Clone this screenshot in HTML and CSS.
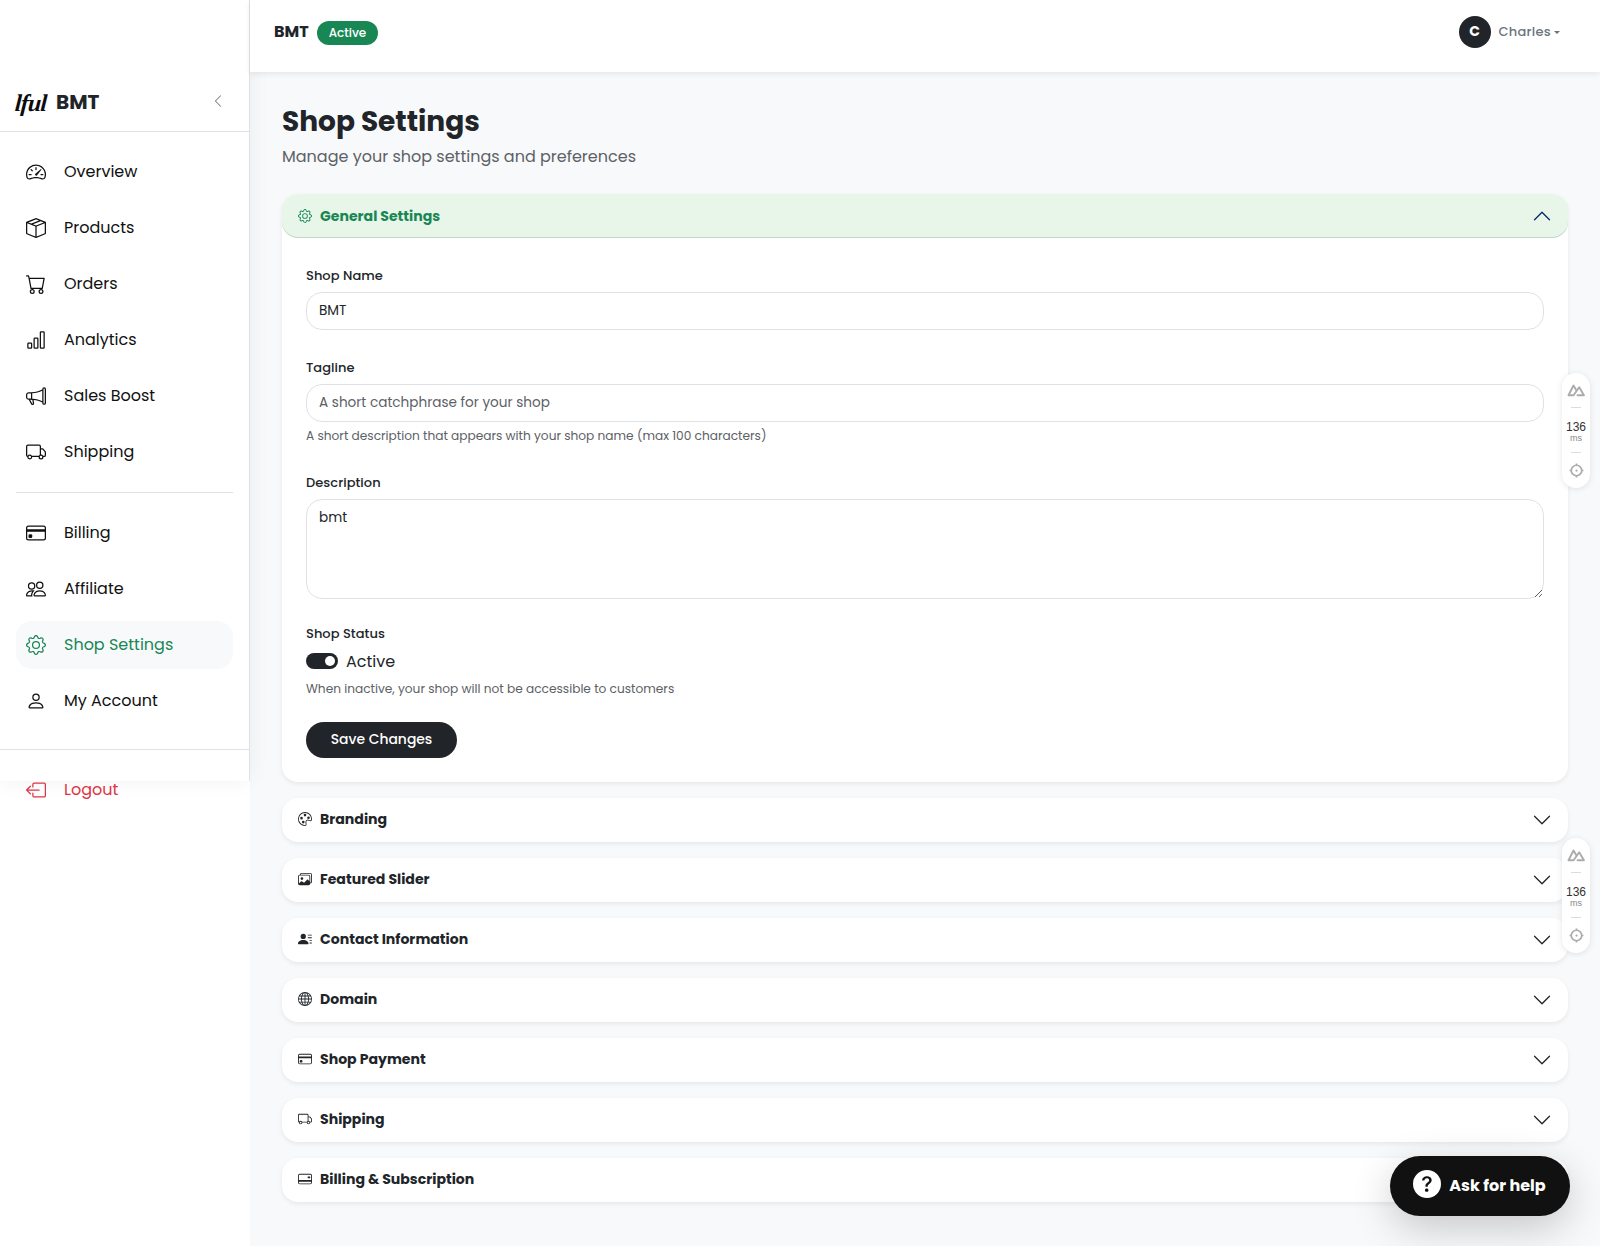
FILE: index.html
```html
<!DOCTYPE html>
<html lang="en">
<head>
<meta charset="utf-8">
<title>Shop Settings - BMT</title>
<link rel="stylesheet" href="styles.css">
</head>
<body>
<svg class="sprite" aria-hidden="true">
  <symbol id="speedometer" viewBox="0 0 16 16"><path d="M8 4a.5.5 0 0 1 .5.5V6a.5.5 0 0 1-1 0V4.5A.5.5 0 0 1 8 4zM3.732 5.732a.5.5 0 0 1 .707 0l.915.914a.5.5 0 1 1-.708.708l-.914-.915a.5.5 0 0 1 0-.707zM2 10a.5.5 0 0 1 .5-.5h1.586a.5.5 0 0 1 0 1H2.5A.5.5 0 0 1 2 10zm9.5 0a.5.5 0 0 1 .5-.5h1.5a.5.5 0 0 1 0 1H12a.5.5 0 0 1-.5-.5zm.754-4.246a.389.389 0 0 0-.527-.02L7.547 9.31a.91.91 0 1 0 1.302 1.258l3.434-4.297a.389.389 0 0 0-.029-.518z"/><path fill-rule="evenodd" d="M0 10a8 8 0 1 1 15.547 2.661c-.442 1.253-1.845 1.602-2.932 1.25C11.309 13.488 9.475 13 8 13c-1.474 0-3.31.488-4.615.911-1.087.352-2.49.003-2.932-1.25A7.988 7.988 0 0 1 0 10zm8-7a7 7 0 0 0-6.603 9.329c.203.575.923.876 1.68.63C4.397 12.533 6.358 12 8 12s3.604.532 4.923.96c.757.245 1.477-.056 1.68-.631A7 7 0 0 0 8 3z"/></symbol>
  <symbol id="box" viewBox="0 0 16 16"><path d="M8.186 1.113a.5.5 0 0 0-.372 0L1.846 3.5l2.404.961L10.404 2l-2.218-.887zm3.564 1.426L5.596 5 8 5.961 14.154 3.5l-2.404-.961zm3.25 1.7-6.5 2.6v7.922l6.5-2.6V4.24zM7.5 14.762V6.838L1 4.239v7.923l6.5 2.6zM7.443.184a1.5 1.5 0 0 1 1.114 0l7.129 2.852A.5.5 0 0 1 16 3.5v8.662a1 1 0 0 1-.629.928l-7.185 2.874a.5.5 0 0 1-.372 0L.63 13.09a1 1 0 0 1-.63-.928V3.5a.5.5 0 0 1 .314-.464L7.443.184z"/></symbol>
  <symbol id="cart" viewBox="0 0 16 16"><path d="M0 1.5A.5.5 0 0 1 .5 1H2a.5.5 0 0 1 .485.379L2.89 3H14.5a.5.5 0 0 1 .491.592l-1.5 8A.5.5 0 0 1 13 12H4a.5.5 0 0 1-.491-.408L2.01 3.607 1.61 2H.5a.5.5 0 0 1-.5-.5zM3.102 4l1.313 7h8.17l1.313-7H3.102zM5 12a2 2 0 1 0 0 4 2 2 0 0 0 0-4zm7 0a2 2 0 1 0 0 4 2 2 0 0 0 0-4zm-7 1a1 1 0 1 1 0 2 1 1 0 0 1 0-2zm7 0a1 1 0 1 1 0 2 1 1 0 0 1 0-2z"/></symbol>
  <symbol id="chart" viewBox="0 0 16 16"><path d="M4 11H2v3h2v-3zm5-4H7v7h2V7zm5-5v12h-2V2h2zm-2-1a1 1 0 0 0-1 1v12a1 1 0 0 0 1 1h2a1 1 0 0 0 1-1V2a1 1 0 0 0-1-1h-2zM6 7a1 1 0 0 1 1-1h2a1 1 0 0 1 1 1v7a1 1 0 0 1-1 1H7a1 1 0 0 1-1-1V7zm-5 4a1 1 0 0 1 1-1h2a1 1 0 0 1 1 1v3a1 1 0 0 1-1 1H2a1 1 0 0 1-1-1v-3z"/></symbol>
  <symbol id="megaphone" viewBox="0 0 16 16"><path d="M13 2.5a1.5 1.5 0 0 1 3 0v11a1.5 1.5 0 0 1-3 0v-.214c-2.162-1.241-4.49-1.843-6.912-2.083l.405 2.712A1 1 0 0 1 5.51 15.1h-.548a1 1 0 0 1-.916-.599l-1.85-3.49a68.14 68.14 0 0 0-.202-.003A2.014 2.014 0 0 1 0 9V7a2.02 2.02 0 0 1 1.992-2.013 74.663 74.663 0 0 0 2.483-.075c3.043-.154 6.148-.849 8.525-2.199V2.5zm1 0v11a.5.5 0 0 0 1 0v-11a.5.5 0 0 0-1 0zm-1 1.35c-2.344 1.205-5.209 1.842-8 2.033v4.233c.18.01.359.022.537.036 2.568.189 5.093.744 7.463 1.993V3.85zm-9 6.215v-4.13a95.09 95.09 0 0 1-1.992.052A1.02 1.02 0 0 0 1 7v2c0 .55.448 1.002 1.006 1.009A60.49 60.49 0 0 1 4 10.065zm-.657.975 1.609 3.037.01.024h.548l-.002-.014-.443-2.966a68.019 68.019 0 0 0-1.722-.082z"/></symbol>
  <symbol id="truck" viewBox="0 0 16 16"><path d="M0 3.5A1.5 1.5 0 0 1 1.5 2h9A1.5 1.5 0 0 1 12 3.5V5h1.02a1.5 1.5 0 0 1 1.17.563l1.481 1.85a1.5 1.5 0 0 1 .329.938V10.5a1.5 1.5 0 0 1-1.5 1.5H14a2 2 0 1 1-4 0H5a2 2 0 1 1-3.998-.085A1.5 1.5 0 0 1 0 10.5v-7zm1.294 7.456A1.999 1.999 0 0 1 4.732 11h5.536a2.01 2.01 0 0 1 .732-.732V3.5a.5.5 0 0 0-.5-.5h-9a.5.5 0 0 0-.5.5v7a.5.5 0 0 0 .294.456zM12 10a2 2 0 0 1 1.732 1h.768a.5.5 0 0 0 .5-.5V8.35a.5.5 0 0 0-.11-.312l-1.48-1.85A.5.5 0 0 0 13.02 6H12v4zm-9 1a1 1 0 1 0 0 2 1 1 0 0 0 0-2zm9 0a1 1 0 1 0 0 2 1 1 0 0 0 0-2z"/></symbol>
  <symbol id="card" viewBox="0 0 16 16"><path d="M0 4a2 2 0 0 1 2-2h12a2 2 0 0 1 2 2v8a2 2 0 0 1-2 2H2a2 2 0 0 1-2-2V4zm2-1a1 1 0 0 0-1 1v1h14V4a1 1 0 0 0-1-1H2zm13 4H1v5a1 1 0 0 0 1 1h12a1 1 0 0 0 1-1V7z"/><path d="M2 10a1 1 0 0 1 1-1h1a1 1 0 0 1 1 1v1a1 1 0 0 1-1 1H3a1 1 0 0 1-1-1v-1z"/></symbol>
  <symbol id="people" viewBox="0 0 16 16"><path d="M15 14s1 0 1-1-1-4-5-4-5 3-5 4 1 1 1 1h8Zm-7.978-1A.261.261 0 0 1 7 12.996c.001-.264.167-1.03.76-1.72C8.312 10.629 9.282 10 11 10c1.717 0 2.687.63 3.24 1.276.593.69.758 1.457.76 1.72l-.008.002a.274.274 0 0 1-.014.002H7.022ZM11 7a2 2 0 1 0 0-4 2 2 0 0 0 0 4Zm3-2a3 3 0 1 1-6 0 3 3 0 0 1 6 0ZM6.936 9.28a5.88 5.88 0 0 0-1.23-.247A7.35 7.35 0 0 0 5 9c-4 0-5 3-5 4 0 .667.333 1 1 1h4.216A2.238 2.238 0 0 1 5 13c0-1.01.377-2.042 1.09-2.904.243-.294.526-.569.846-.816ZM4.92 10A5.493 5.493 0 0 0 4 13H1c0-.26.164-1.03.76-1.724.545-.636 1.492-1.256 3.16-1.275ZM1.5 5.5a3 3 0 1 1 6 0 3 3 0 0 1-6 0Zm3-2a2 2 0 1 0 0 4 2 2 0 0 0 0-4Z"/></symbol>
  <symbol id="gear" viewBox="0 0 16 16"><path d="M8 4.754a3.246 3.246 0 1 0 0 6.492 3.246 3.246 0 0 0 0-6.492zM5.754 8a2.246 2.246 0 1 1 4.492 0 2.246 2.246 0 0 1-4.492 0z"/><path d="M9.796 1.343c-.527-1.79-3.065-1.79-3.592 0l-.094.319a.873.873 0 0 1-1.255.52l-.292-.16c-1.64-.892-3.433.902-2.54 2.541l.159.292a.873.873 0 0 1-.52 1.255l-.319.094c-1.79.527-1.79 3.065 0 3.592l.319.094a.873.873 0 0 1 .52 1.255l-.16.292c-.892 1.64.901 3.434 2.541 2.54l.292-.159a.873.873 0 0 1 1.255.52l.094.319c.527 1.79 3.065 1.79 3.592 0l.094-.319a.873.873 0 0 1 1.255-.52l.292.16c1.64.893 3.434-.902 2.54-2.541l-.159-.292a.873.873 0 0 1 .52-1.255l.319-.094c1.79-.527 1.79-3.065 0-3.592l-.319-.094a.873.873 0 0 1-.52-1.255l.16-.292c.893-1.64-.902-3.433-2.541-2.54l-.292.159a.873.873 0 0 1-1.255-.52l-.094-.319zm-2.633.283c.246-.835 1.428-.835 1.674 0l.094.319a1.873 1.873 0 0 0 2.693 1.115l.291-.16c.764-.415 1.6.42 1.184 1.185l-.159.292a1.873 1.873 0 0 0 1.116 2.692l.318.094c.835.246.835 1.428 0 1.674l-.319.094a1.873 1.873 0 0 0-1.115 2.693l.16.291c.415.764-.42 1.6-1.185 1.184l-.291-.159a1.873 1.873 0 0 0-2.693 1.116l-.094.318c-.246.835-1.428.835-1.674 0l-.094-.319a1.873 1.873 0 0 0-2.692-1.115l-.292.16c-.764.415-1.6-.42-1.184-1.185l.159-.291A1.873 1.873 0 0 0 1.945 8.93l-.319-.094c-.835-.246-.835-1.428 0-1.674l.319-.094A1.873 1.873 0 0 0 3.06 4.377l-.16-.292c-.415-.764.42-1.6 1.185-1.184l.292.159a1.873 1.873 0 0 0 2.692-1.115l.094-.319z"/></symbol>
  <symbol id="person" viewBox="0 0 16 16"><path d="M8 8a3 3 0 1 0 0-6 3 3 0 0 0 0 6zm2-3a2 2 0 1 1-4 0 2 2 0 0 1 4 0zm4 8c0 1-1 1-1 1H3s-1 0-1-1 1-4 6-4 6 3 6 4zm-1-.004c-.001-.246-.154-.986-.832-1.664C11.516 10.68 10.289 10 8 10c-2.29 0-3.516.68-4.168 1.332-.678.678-.83 1.418-.832 1.664h10z"/></symbol>
  <symbol id="exit" viewBox="0 0 16 16"><path d="M6 12.5a.5.5 0 0 0 .5.5h8a.5.5 0 0 0 .5-.5v-9a.5.5 0 0 0-.5-.5h-8a.5.5 0 0 0-.5.5v2a.5.5 0 0 1-1 0v-2A1.5 1.5 0 0 1 6.5 2h8A1.5 1.5 0 0 1 16 3.5v9a1.5 1.5 0 0 1-1.5 1.5h-8A1.5 1.5 0 0 1 5 12.5v-2a.5.5 0 0 1 1 0v2z"/><path d="M.146 8.354a.5.5 0 0 1 0-.708l3-3a.5.5 0 1 1 .708.708L1.707 7.5H10.5a.5.5 0 0 1 0 1H1.707l2.147 2.146a.5.5 0 0 1-.708.708l-3-3z"/></symbol>
  <symbol id="chevron-left" viewBox="0 0 16 16"><path d="M11.354 1.646a.5.5 0 0 1 0 .708L5.707 8l5.647 5.646a.5.5 0 0 1-.708.708l-6-6a.5.5 0 0 1 0-.708l6-6a.5.5 0 0 1 .708 0z"/></symbol>
  <symbol id="chevron-down" viewBox="0 0 16 16"><path d="M1.646 4.646a.5.5 0 0 1 .708 0L8 10.293l5.646-5.647a.5.5 0 0 1 .708.708l-6 6a.5.5 0 0 1-.708 0l-6-6a.5.5 0 0 1 0-.708z"/></symbol>
  <symbol id="palette" viewBox="0 0 16 16"><path d="M8 5a1.5 1.5 0 1 0 0-3 1.5 1.5 0 0 0 0 3zm4 3a1.5 1.5 0 1 0 0-3 1.5 1.5 0 0 0 0 3zM5.5 7a1.5 1.5 0 1 1-3 0 1.5 1.5 0 0 1 3 0zm.5 6a1.5 1.5 0 1 0 0-3 1.5 1.5 0 0 0 0 3z"/><path d="M16 8c0 3.15-1.866 2.585-3.567 2.07C11.42 9.763 10.465 9.473 10 10c-.603.683-.475 1.819-.351 2.92C9.826 14.495 9.996 16 8 16a8 8 0 1 1 8-8zm-8 7c.611 0 .654-.171.655-.176.078-.146.124-.464.07-1.119-.014-.168-.037-.37-.061-.591-.052-.464-.112-1.005-.118-1.462-.01-.707.083-1.61.704-2.314.369-.417.845-.578 1.272-.618.404-.038.812.026 1.16.104.343.077.702.186 1.025.284l.028.008c.346.105.658.199.953.266.653.148.904.083.991.024C14.717 9.38 15 9.161 15 8a7 7 0 1 0-7 7z"/></symbol>
  <symbol id="images" viewBox="0 0 16 16"><path d="M4.502 9a1.5 1.5 0 1 0 0-3 1.5 1.5 0 0 0 0 3z"/><path d="M14.002 13a2 2 0 0 1-2 2h-10a2 2 0 0 1-2-2V5A2 2 0 0 1 2 3a2 2 0 0 1 2-2h10a2 2 0 0 1 2 2v8a2 2 0 0 1-1.998 2zM14 2H4a1 1 0 0 0-1 1h9.002a2 2 0 0 1 2 2v7A1 1 0 0 0 15 11V3a1 1 0 0 0-1-1zM2.002 4a1 1 0 0 0-1 1v8l2.646-2.354a.5.5 0 0 1 .63-.062l2.66 1.773 3.71-3.71a.5.5 0 0 1 .577-.094l1.777 1.947V5a1 1 0 0 0-1-1h-10z"/></symbol>
  <symbol id="person-lines" viewBox="0 0 16 16"><path d="M6 8a3 3 0 1 0 0-6 3 3 0 0 0 0 6zm-5 6s-1 0-1-1 1-4 6-4 6 3 6 4-1 1-1 1H1zM11 3.5a.5.5 0 0 1 .5-.5h4a.5.5 0 0 1 0 1h-4a.5.5 0 0 1-.5-.5zm.5 2.5a.5.5 0 0 0 0 1h4a.5.5 0 0 0 0-1h-4zm2 3a.5.5 0 0 0 0 1h2a.5.5 0 0 0 0-1h-2zm0 3a.5.5 0 0 0 0 1h2a.5.5 0 0 0 0-1h-2z"/></symbol>
  <symbol id="globe" viewBox="0 0 16 16"><path d="M0 8a8 8 0 1 1 16 0A8 8 0 0 1 0 8zm7.5-6.923c-.67.204-1.335.82-1.887 1.855A7.97 7.97 0 0 0 5.145 4H7.5V1.077zM4.09 4a9.267 9.267 0 0 1 .64-1.539 6.7 6.7 0 0 1 .597-.933A7.025 7.025 0 0 0 2.255 4H4.09zm-.582 3.5c.03-.877.138-1.718.312-2.5H1.674a6.958 6.958 0 0 0-.656 2.5h2.49zM4.847 5a12.5 12.5 0 0 0-.338 2.5H7.5V5H4.847zM8.5 5v2.5h2.99a12.495 12.495 0 0 0-.337-2.5H8.5zM4.51 8.5a12.5 12.5 0 0 0 .337 2.5H7.5V8.5H4.51zm3.99 0V11h2.653c.187-.765.306-1.608.338-2.5H8.5zM5.145 12c.138.386.295.744.468 1.068.552 1.035 1.218 1.65 1.887 1.855V12H5.145zm.182 2.472a6.696 6.696 0 0 1-.597-.933A9.268 9.268 0 0 1 4.09 12H2.255a7.024 7.024 0 0 0 3.072 2.472zM3.82 11a13.652 13.652 0 0 1-.312-2.5h-2.49c.062.89.291 1.733.656 2.5H3.82zm6.853 3.472A7.024 7.024 0 0 0 13.745 12H11.91a9.27 9.27 0 0 1-.64 1.539 6.688 6.688 0 0 1-.597.933zM8.5 12v2.923c.67-.204 1.335-.82 1.887-1.855.173-.324.33-.682.468-1.068H8.5zm3.68-1h2.146c.365-.767.594-1.61.656-2.5h-2.49a13.65 13.65 0 0 1-.312 2.5zm2.802-3.5a6.959 6.959 0 0 0-.656-2.5H12.18c.174.782.282 1.623.312 2.5h2.49zM11.27 2.461c.247.464.462.98.64 1.539h1.835a7.024 7.024 0 0 0-3.072-2.472c.218.284.418.598.597.933zM10.855 4a7.966 7.966 0 0 0-.468-1.068C9.835 1.897 9.17 1.282 8.5 1.077V4h2.355z"/></symbol>
  <symbol id="card-back" viewBox="0 0 16 16"><path d="M11 5.5a.5.5 0 0 1 .5-.5h2a.5.5 0 0 1 .5.5v1a.5.5 0 0 1-.5.5h-2a.5.5 0 0 1-.5-.5v-1z"/><path d="M2 2a2 2 0 0 0-2 2v8a2 2 0 0 0 2 2h12a2 2 0 0 0 2-2V4a2 2 0 0 0-2-2H2zm13 2v5H1V4a1 1 0 0 1 1-1h12a1 1 0 0 1 1 1zm-1 9H2a1 1 0 0 1-1-1v-1h14v1a1 1 0 0 1-1 1z"/></symbol>
  <symbol id="question" viewBox="0 0 16 16"><path d="M16 8A8 8 0 1 1 0 8a8 8 0 0 1 16 0zM5.496 6.033h.825c.138 0 .248-.113.266-.25.09-.656.54-1.134 1.342-1.134.686 0 1.314.343 1.314 1.168 0 .635-.374.927-.965 1.371-.673.489-1.206 1.06-1.168 1.987l.003.217a.25.25 0 0 0 .25.246h.811a.25.25 0 0 0 .25-.25v-.105c0-.718.273-.927 1.01-1.486.609-.463 1.244-.977 1.244-2.056 0-1.511-1.276-2.241-2.673-2.241-1.267 0-2.655.59-2.75 2.286a.237.237 0 0 0 .241.247zm2.325 6.443c.61 0 1.029-.394 1.029-.927 0-.552-.42-.94-1.029-.94-.584 0-1.009.388-1.009.94 0 .533.425.927 1.01.927z"/></symbol>
  <symbol id="peaks" viewBox="0 0 18 13"><path d="M6.6 11.3H1.5L6.5 1.5l2.8 4.7M6.6 11.3l5.6-8.1 4.7 8.1h-6.4" fill="none" stroke="currentColor" stroke-width="1.9" stroke-linejoin="round" stroke-linecap="round"/></symbol>
  <symbol id="target" viewBox="0 0 16 16"><g fill="none" stroke="currentColor" stroke-width="1.8"><circle cx="8" cy="8" r="5.6"/><path d="M8 .6v2.6M8 12.8v2.6M.6 8h2.6M12.8 8h2.6"/></g><circle cx="8" cy="8" r="1.2"/></symbol>
</svg>

<div class="layout">
  <div class="rail">
    <aside class="sidebar">
      <div class="brand">
        <span class="brand-logo"><span class="brand-script">lful</span></span>
        <span class="brand-name">BMT</span>
        <button class="collapse"><svg><use href="#chevron-left"/></svg></button>
      </div>
      <nav class="nav">
        <a class="nav-item"><svg><use href="#speedometer"/></svg>Overview</a>
        <a class="nav-item"><svg><use href="#box"/></svg>Products</a>
        <a class="nav-item"><svg><use href="#cart"/></svg>Orders</a>
        <a class="nav-item"><svg><use href="#chart"/></svg>Analytics</a>
        <a class="nav-item"><svg><use href="#megaphone"/></svg>Sales Boost</a>
        <a class="nav-item"><svg><use href="#truck"/></svg>Shipping</a>
        <hr class="nav-rule">
        <a class="nav-item"><svg><use href="#card"/></svg>Billing</a>
        <a class="nav-item"><svg><use href="#people"/></svg>Affiliate</a>
        <a class="nav-item active"><svg><use href="#gear"/></svg>Shop Settings</a>
        <a class="nav-item"><svg><use href="#person"/></svg>My Account</a>
      </nav>
      <div class="nav-foot">
        <a class="nav-item logout"><svg><use href="#exit"/></svg>Logout</a>
      </div>
    </aside>
  </div>

  <div class="page">
    <header class="topbar">
      <div class="shop"><span class="shop-name">BMT</span><span class="badge">Active</span></div>
      <div class="user"><span class="avatar">C</span><span class="user-name">Charles</span><span class="caret"></span></div>
    </header>

    <main class="content">
      <h1 class="title">Shop Settings</h1>
      <p class="subtitle">Manage your shop settings and preferences</p>

      <div class="accordion">
        <section class="panel">
          <div class="panel-head open"><svg class="panel-icon"><use href="#gear"/></svg><span>General Settings</span><svg class="chevron"><use href="#chevron-down"/></svg></div>
          <form class="panel-body">
            <div class="field">
              <label class="label">Shop Name</label>
              <input class="input" type="text" value="BMT">
            </div>
            <div class="field">
              <label class="label">Tagline</label>
              <input class="input" type="text" placeholder="A short catchphrase for your shop">
              <div class="hint">A short description that appears with your shop name (max 100 characters)</div>
            </div>
            <div class="field">
              <label class="label">Description</label>
              <textarea class="input area">bmt</textarea>
            </div>
            <div class="field">
              <label class="label label-status">Shop Status</label>
              <div class="switch-row"><span class="switch"></span><span class="switch-text">Active</span></div>
              <div class="hint">When inactive, your shop will not be accessible to customers</div>
            </div>
            <button class="save" type="button">Save Changes</button>
          </form>
        </section>
        <section class="panel"><div class="panel-head"><svg class="panel-icon"><use href="#palette"/></svg><span>Branding</span><svg class="chevron"><use href="#chevron-down"/></svg></div></section>
        <section class="panel"><div class="panel-head"><svg class="panel-icon"><use href="#images"/></svg><span>Featured Slider</span><svg class="chevron"><use href="#chevron-down"/></svg></div></section>
        <section class="panel"><div class="panel-head"><svg class="panel-icon"><use href="#person-lines"/></svg><span>Contact Information</span><svg class="chevron"><use href="#chevron-down"/></svg></div></section>
        <section class="panel"><div class="panel-head"><svg class="panel-icon"><use href="#globe"/></svg><span>Domain</span><svg class="chevron"><use href="#chevron-down"/></svg></div></section>
        <section class="panel"><div class="panel-head"><svg class="panel-icon"><use href="#card"/></svg><span>Shop Payment</span><svg class="chevron"><use href="#chevron-down"/></svg></div></section>
        <section class="panel"><div class="panel-head"><svg class="panel-icon"><use href="#truck"/></svg><span>Shipping</span><svg class="chevron"><use href="#chevron-down"/></svg></div></section>
        <section class="panel"><div class="panel-head"><svg class="panel-icon"><use href="#card-back"/></svg><span>Billing &amp; Subscription</span><svg class="chevron"><use href="#chevron-down"/></svg></div></section>
      </div>
    </main>
  </div>
</div>

<div class="perf perf-upper"><svg class="peaks"><use href="#peaks"/></svg><i class="dash"></i><div class="perf-time"><b>136</b><small>ms</small></div><i class="dash"></i><svg class="target"><use href="#target"/></svg></div>
<div class="perf perf-lower"><svg class="peaks"><use href="#peaks"/></svg><i class="dash"></i><div class="perf-time"><b>136</b><small>ms</small></div><i class="dash"></i><svg class="target"><use href="#target"/></svg></div>

<button class="help"><svg><use href="#question"/></svg>Ask for help</button>
</body>
</html>
```
FILE: styles.css
```css
* { box-sizing: border-box; }

body {
  margin: 0;
  font: 400 16px/24px Poppins, Inter, sans-serif;
  color: #212529;
  background: #f8f9fb;
}

svg { fill: currentColor; flex: none; display: block; }
button { font: inherit; border: 0; background: none; padding: 0; }
.sprite { position: absolute; width: 0; height: 0; overflow: hidden; }

.layout { display: flex; height: 1246px; overflow: hidden; }

/* Sidebar */
.rail { width: 250px; flex: none; background: #fff; }
.sidebar {
  position: relative;
  height: 781px;
  padding-top: 72px;
  background: #fff;
  border-right: 1px solid #dee2e6;
  box-shadow: 0 0 20px rgba(0, 0, 0, .06);
}
.brand {
  display: flex;
  align-items: center;
  gap: 8px;
  height: 60px;
  padding: 0 24px 0 16px;
  border-bottom: 1px solid #dee2e6;
}
.brand-logo {
  width: 32px;
  height: 32px;
  display: flex;
  align-items: center;
  justify-content: center;
}
.brand-script {
  font: italic 700 24px/32px "Liberation Serif", serif;
  letter-spacing: -.8px;
  transform: translate(-1px, 1px) skewX(-4deg);
  color: #0c0c0c;
}
.brand-name { font-size: 20px; font-weight: 700; line-height: 30px; }
.collapse { margin-left: auto; margin-top: -2px; color: #6c757d; }
.collapse svg { width: 14px; height: 14px; }

.nav { padding: 16px 16px 24px; display: flex; flex-direction: column; gap: 8px; }
.nav-item {
  display: flex;
  align-items: center;
  gap: 18px;
  height: 48px;
  padding: 0 10px;
  border-radius: 16px;
  color: #111;
}
.nav-item svg { width: 20px; height: 20px; margin-top: -1px; }
.nav-item.active { background: #f8f9fb; color: #198754; }
.nav-rule { width: 100%; margin: 8px 0; border: 0; border-top: 1px solid #dee2e6; }
.nav-foot { padding: 16px; border-top: 1px solid #dee2e6; }
.nav-item.logout { color: #dc3545; }

/* Top bar */
.page { flex: 1; min-width: 0; }
.topbar {
  position: relative;
  display: flex;
  justify-content: space-between;
  align-items: flex-start;
  height: 72px;
  padding: 16px 40px 0 24px;
  background: #fff;
  box-shadow: 0 2px 6px rgba(0, 0, 0, .08);
}
.shop, .user { display: flex; align-items: center; height: 32px; gap: 8px; }
.shop-name { font-weight: 700; }
.badge {
  height: 24px;
  padding: 0 12px;
  margin-top: 2px;
  border-radius: 12px;
  background: #198754;
  color: #fff;
  font-size: 12px;
  font-weight: 500;
}
.avatar {
  width: 32px;
  height: 32px;
  border-radius: 50%;
  background: #212529;
  color: #fff;
  font-size: 14px;
  font-weight: 700;
  line-height: 31px;
  text-align: center;
}
.user-name { font-size: 13px; letter-spacing: .25px; font-weight: 500; color: #6c757d; }
.caret {
  margin-left: -5px;
  border: 3px solid transparent;
  border-top-color: #6c757d;
  border-bottom: 0;
}

/* Content */
.content { padding: 32px 32px 0; }
.title { margin: 0; font-size: 28px; font-weight: 700; line-height: 36px; }
.subtitle { margin: 5px 0 25px; color: #5c6166; }
.accordion { display: flex; flex-direction: column; gap: 16px; }
.panel {
  background: #fff;
  border-radius: 16px;
  box-shadow: 0 2px 5px rgba(0, 0, 0, .07);
}
.panel-head {
  display: flex;
  align-items: center;
  gap: 8px;
  height: 44px;
  padding: 0 16px 2px;
  border-radius: 16px;
  font-size: 14.08px;
  font-weight: 700;
}
.panel-icon { width: 14px; height: 14px; }
.chevron { width: 20px; height: 20px; margin: 2px 0 0 auto; }
.panel-head.open {
  padding-bottom: 0;
  background: #e8f5e9;
  color: #198754;
  box-shadow: inset 0 -1px 0 #c3d5cb;
}
.panel-head.open .chevron { margin-top: 0; color: #052c65; transform: rotate(180deg); }

.panel-body { padding: 24px; display: flex; flex-direction: column; gap: 24px; align-items: stretch; }
.field { display: flex; flex-direction: column; }
.label { font-size: 13px; letter-spacing: .04px; font-weight: 500; line-height: 27px; height: 22px; margin-bottom: 8px; }
.label-status { line-height: 22px; }
.input {
  height: 38px;
  padding: 0 12px;
  border: 1px solid #dee2e6;
  border-radius: 16px;
  background: #fff;
  color: #212529;
  font: 400 13.6px/20px Poppins, Inter, sans-serif;
  outline: 0;
}
.input::placeholder { color: #5c6166; opacity: 1; }
.area { height: 100px; padding: 8px 12px; resize: vertical; }
.hint { margin-top: 4px; font-size: 12.16px; line-height: 19px; color: #5c6166; }
.switch-row { display: flex; align-items: center; gap: 8px; height: 16px; margin-bottom: 6px; }
.switch-text { padding-top: 1px; }
.switch {
  width: 32px;
  height: 16px;
  padding: 3px;
  border-radius: 8px;
  background: #212529;
  display: flex;
  justify-content: flex-end;
}
.switch::after { content: ""; width: 10px; height: 10px; border-radius: 50%; background: #fff; }
.save {
  align-self: flex-start;
  width: 151px;
  height: 36px;
  padding-bottom: 2px;
  border-radius: 18px;
  background: #212529;
  color: #fff;
  font-size: 13.9px;
  font-weight: 500;
}

/* Floating widgets */
.perf {
  position: absolute;
  left: 1562px;
  width: 28px;
  height: 115px;
  padding: 11px 0 10px;
  border-radius: 14px;
  background: #fff;
  box-shadow: 0 1px 6px rgba(0, 0, 0, .1);
  display: flex;
  flex-direction: column;
  align-items: center;
  justify-content: space-between;
  color: #acacac;
}
.perf-upper { top: 373px; }
.perf-lower { top: 838px; }
.peaks { width: 18px; height: 13px; }
.target { width: 15px; height: 15px; }
.dash { width: 10px; height: 1px; background: #ddd; }
.perf-time { padding-top: 3px; text-align: center; font-family: "Liberation Sans", sans-serif; display: flex; flex-direction: column; }
.perf-time b { font-size: 12px; font-weight: 400; line-height: 12px; color: #333; }
.perf-time small { font-size: 9px; line-height: 10px; color: #888; }

.help {
  position: absolute;
  left: 1390px;
  top: 1156px;
  width: 180px;
  height: 60px;
  padding: 0 23px;
  display: flex;
  align-items: center;
  justify-content: center;
  gap: 8px;
  border-radius: 30px;
  background: #111;
  color: #fff;
  font-weight: 700;
  white-space: nowrap;
  box-shadow: 0 12px 40px rgba(0, 0, 0, .2);
}
.help svg { width: 28px; height: 28px; margin: -4px 0 0 -1px; }
```
